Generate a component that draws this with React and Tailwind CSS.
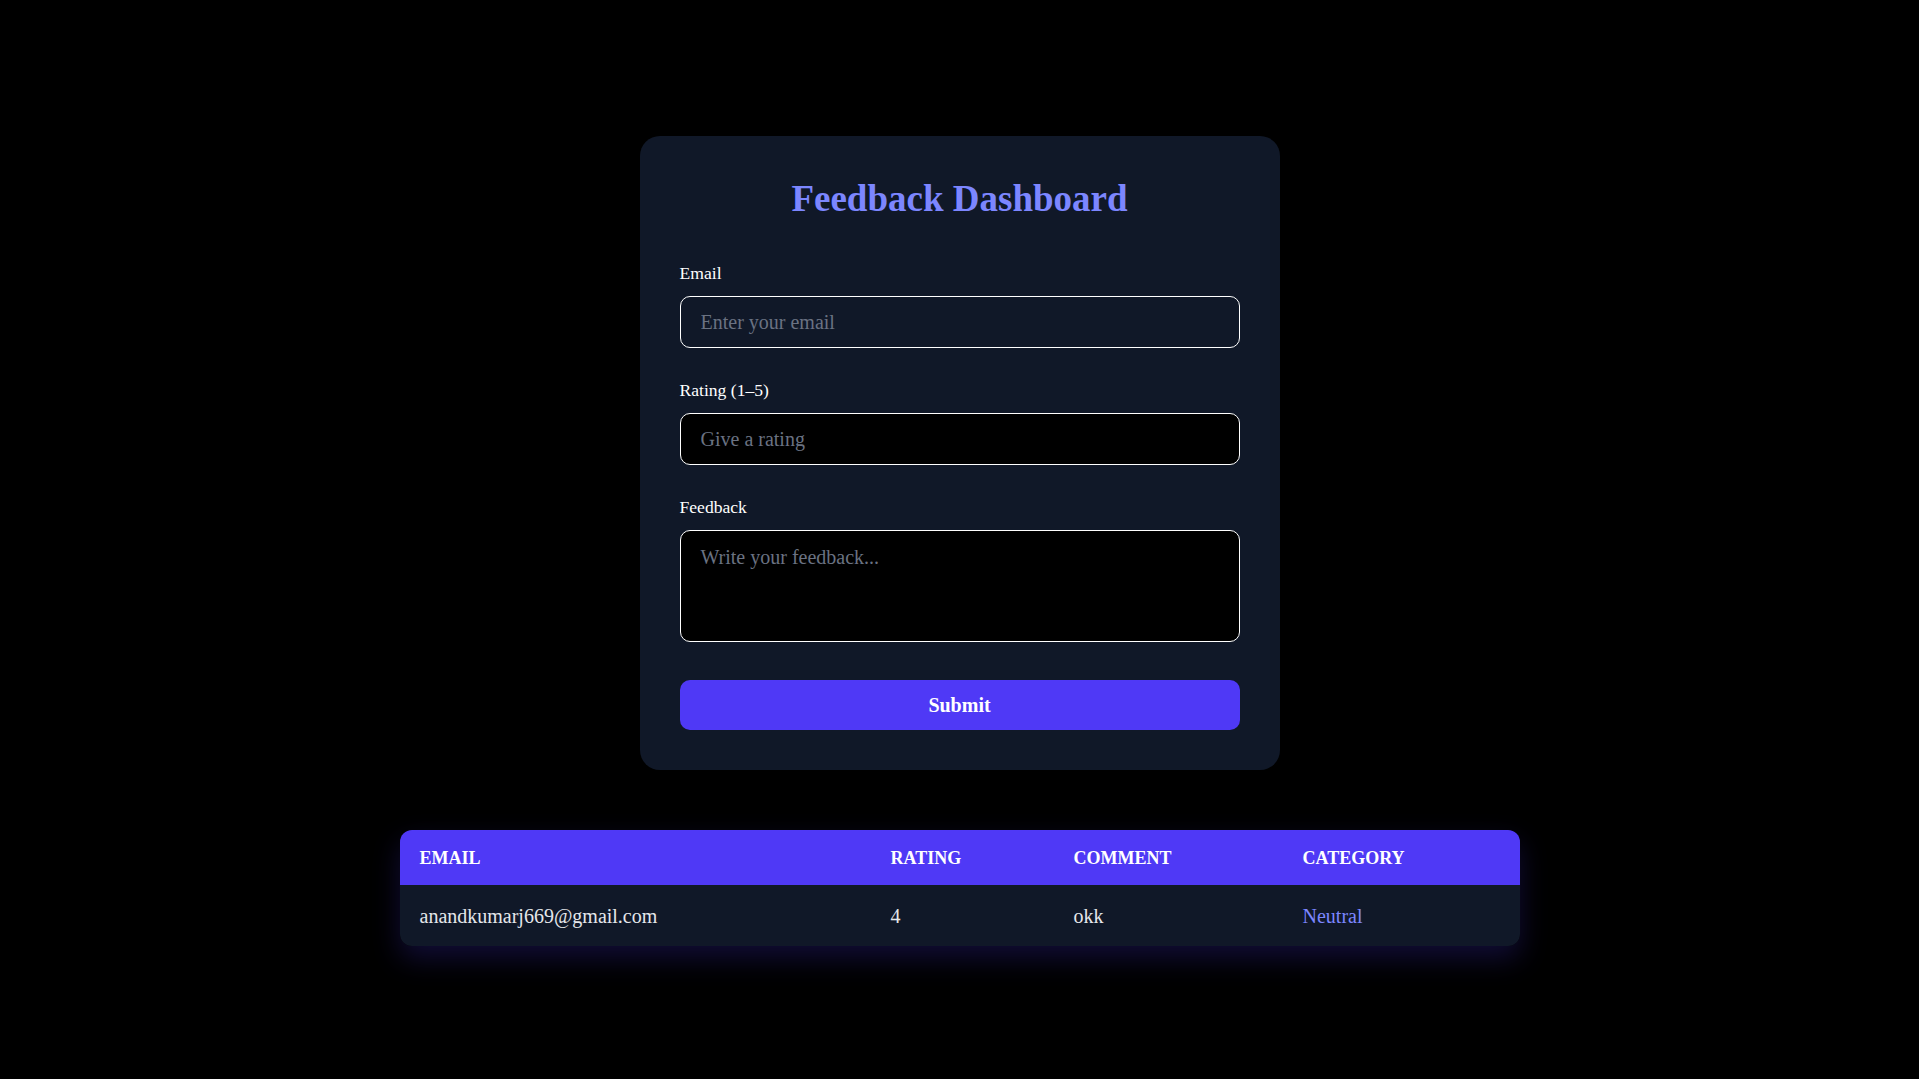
import React from "react";

export default function App() {
  const rows = [
    { email: "anandkumarj669@gmail.com", rating: 4, comment: "okk", category: "Neutral" },
  ];
  return (
    <div className="min-h-screen bg-black font-['Liberation_Serif','Times_New_Roman',serif] flex flex-col items-center pt-[136px] pb-16">
      <div className="w-[640px] bg-[#101828] rounded-[20px] px-10 pt-10 pb-10">
        <h1 className="text-center text-[37px] leading-[45px] font-bold text-[#7c86ff] mb-[39px]">
          Feedback Dashboard
        </h1>

        <label className="block text-white text-[17.6px] leading-[26px] mb-[10px]">Email</label>
        <input
          type="email"
          placeholder="Enter your email"
          className="block w-full h-[52px] px-5 text-xl bg-transparent text-white placeholder:text-[#6a7282] border border-white rounded-[10px] outline-none mb-[29px]"
        />

        <label className="block text-white text-[17.6px] leading-[26px] mb-[10px]">Rating (1–5)</label>
        <input
          type="text"
          placeholder="Give a rating"
          className="block w-full h-[52px] px-5 text-xl bg-black text-white placeholder:text-[#6a7282] border border-white rounded-[10px] outline-none mb-[29px]"
        />

        <label className="block text-white text-[17.6px] leading-[26px] mb-[10px]">Feedback</label>
        <textarea
          placeholder="Write your feedback..."
          className="block w-full h-[112px] px-5 py-3 leading-7 text-xl bg-black text-white placeholder:text-[#6a7282] border border-white rounded-[10px] outline-none resize-none mb-[38px]"
        />

        <button className="block w-full h-[50px] rounded-[10px] bg-[#4f39f6] text-white text-xl font-bold">
          Submit
        </button>
      </div>

      <div className="w-[1120px] mt-[60px] rounded-xl overflow-hidden shadow-[0_12px_28px_rgba(79,57,246,0.22)]">
        <table className="w-full table-fixed border-collapse text-left">
          <colgroup>
            <col className="w-[471px]" />
            <col className="w-[183px]" />
            <col className="w-[229px]" />
            <col />
          </colgroup>
          <thead>
            <tr className="bg-[#4f39f6] text-white">
              <th className="px-5 h-[55px] text-lg font-bold uppercase">Email</th>
              <th className="px-5 h-[55px] text-lg font-bold uppercase">Rating</th>
              <th className="px-5 h-[55px] text-lg font-bold uppercase">Comment</th>
              <th className="px-5 h-[55px] text-lg font-bold uppercase">Category</th>
            </tr>
          </thead>
          <tbody>
            {rows.map((r) => (
              <tr key={r.email} className="bg-[#101828] text-gray-200">
                <td className="px-5 h-[61px] text-xl">{r.email}</td>
                <td className="px-5 h-[61px] text-xl">{r.rating}</td>
                <td className="px-5 h-[61px] text-xl">{r.comment}</td>
                <td className="px-5 h-[61px] text-xl text-[#7c86ff]">{r.category}</td>
              </tr>
            ))}
          </tbody>
        </table>
      </div>
    </div>
  );
}
